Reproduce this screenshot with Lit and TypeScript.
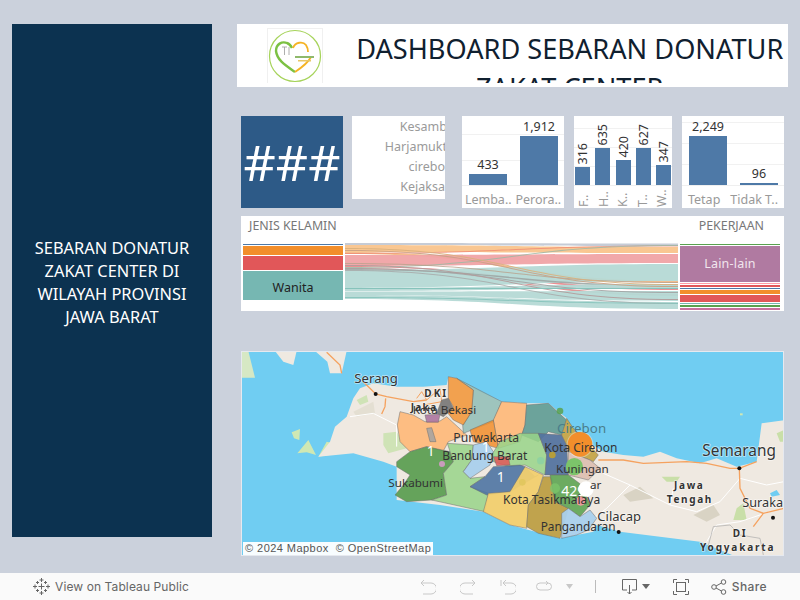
import { LitElement, html, css, svg } from "lit";
import { customElement } from "lit/decorators.js";

type Bar = { v: string; h: number; label: string };
const X = 810; // offset between the two map halves, in map units

const z4 = (pts: number[]) => pts.map((n, i) => (i % 2 === 0 ? n + X : n)).join(" ");
const poly = (pts: string, fill: string, op = 0.85) =>
  svg`<polygon points=${pts} fill=${fill} fill-opacity=${op} stroke="#6f6f6f" stroke-opacity=".6" stroke-width="2.5" stroke-linejoin="round"></polygon>`;

const regions: [string, string, number?][] = [
  ["480,200 520,210 555,230 600,228 620,215 680,270 625,290 610,318 560,305 510,320 480,290 472,240", "#fdbb7c", 0.95],
  ["650,100 785,170 760,230 670,265 668,240 695,200 700,135", "#8fbdb6"],
  ["625,95 650,100 700,135 695,200 670,240 640,225 620,200 640,185 625,160", "#f28e2b", 0.8],
  ["605,165 625,160 640,190 610,215 590,205", "#6f6f6f"],
  ["555,210 600,208 595,232 560,232", "#a86f9b"],
  ["560,250 575,248 588,290 570,290", "#a3a3a3"],
  ["785,170 860,175 855,240 840,290 775,310 760,225", "#fdbb7c", 0.95],
  ["690,255 760,225 775,310 720,295 700,290", "#f28e2b", 0.85],
  [z4([50, 180, 115, 175, 170, 225, 155, 270, 115, 260, 85, 290, 35, 270, 45, 240]), "#5d9b94", 0.9],
  ["470,350 510,320 560,305 630,320 640,350 610,385 620,450 575,465 500,470 465,450 490,420 510,390 470,365", "#559b4c", 0.9],
  ["610,385 640,350 622,295 700,300 695,345 670,380 690,400 735,395 690,425 745,445 735,500 575,465 620,450", "#98d488"],
  ["700,300 740,290 760,320 750,360 690,400 670,380 695,345", "#a9d0ec", 0.95],
  [z4([30, 265, 85, 265, 110, 330, 105, 390, 45, 360, 0, 365, -50, 350, -55, 330, -30, 290]), "#98d488"],
  ["760,365 840,360 855,365 885,395 895,390 810,440 740,450 690,425 735,395", "#4e74a3", 0.9],
  ["760,335 805,335 810,360 770,362", "#e15759"],
  ["745,445 810,440 855,365 910,390 895,440 865,480 860,550 810,540 730,500", "#f1cf6e", 0.95],
  [z4([100, 395, 125, 395, 135, 470, 175, 490, 150, 580, 85, 565, 50, 545, 55, 480, 85, 440]), "#bd9f45", 0.95],
  [z4([85, 265, 155, 270, 170, 300, 175, 390, 105, 390, 110, 330]), "#54749f", 0.95],
  [z4([155, 270, 170, 220, 190, 250, 265, 330, 250, 350, 240, 345, 175, 320, 170, 300]), "#c4a548", 0.95],
  [z4([175, 320, 240, 345, 270, 370, 235, 405, 175, 390]), "#dcc0b2", 0.95],
  [z4([120, 390, 175, 390, 215, 420, 240, 480, 210, 515, 175, 490, 135, 470]), "#64a85a", 0.95],
  [z4([155, 505, 175, 490, 210, 515, 240, 495, 260, 520, 235, 555, 200, 570, 155, 580]), "#a9d0ec", 0.95],
];

const labels: [number, number, string, number][] = [
  [343, 113, "Serang", 39.500],
  [518, 208, "Kota Bekasi", 35],
  [640, 292, "Purwakarta", 36.500],
  [607, 346, "Bandung Barat", 36],
  [445, 425, "Sukabumi", 35],
  [X + 103, 320, "Kota Cirebon", 36],
  [X + 138, 383, "Kuningan", 35],
  [X + 240, 432, "ar", 35],
  [789, 478, "Kota Tasikmalaya", 36],
  [X + 92, 558, "Pangandaran", 35.500],
  [X + 262, 527, "Cilacap", 39],
  [X + 577, 332, "Semarang", 46],
  [X + 697, 485, "Surakarta", 38],
];
const bold: [number, number, string, number][] = [
  [553, 155, "DKI", 6],
  [512, 197, "Jaka", 4],
  [X + 492, 432, "Jawa", 5],
  [X + 470, 474, "Tengah", 5],
  [X + 668, 575, "DI", 5],
  [X + 570, 617, "Yogyakarta", 5.500],
];

const sankeyBands: [number, number, number, number, string, number][] = [
  [243, 245, 243.500, 246, "#c6ccd6", 1],
  [245, 252, 247, 253, "#f9c48c", 0.95],
  [252, 254, 281, 283, "#f2b27a", 0.85],
  [253, 254, 245.500, 246.500, "#ef8a73", 0.8],
  [255, 266, 254, 263, "#f0a3a5", 0.95],
  [266, 267, 288, 290, "#e98488", 0.9],
  [268, 269, 294, 296, "#d98f8f", 0.9],
  [270, 288, 264, 281, "#b5d9d5", 0.95],
  [267, 268, 245, 246, "#a2b8a4", 0.9],
  [269, 270, 285, 287, "#9da6a4", 0.9],
  [288, 291, 284, 288, "#b5d9d5", 0.95],
  [291.500, 295, 291, 301, "#b5d9d5", 0.95],
  [295, 299, 302, 309, "#b5d9d5", 0.95],
  [268, 269, 292, 293, "#a3a3a3", 0.9],
  [263, 264, 282, 283, "#b9a18c", 0.8],
  [248, 249, 284, 285, "#d9b07c", 0.9],
  [250, 251, 286, 287, "#c9a184", 0.9],
  [265, 266, 299, 300, "#b39a9a", 0.9],
  [270, 271, 303, 304, "#a6a6a6", 0.8],
  [288, 289, 288, 289, "#86c3bb", 1],
  [297, 298, 303, 304, "#86c3bb", 0.9],
];
const band = (y0: number, y1: number, y2: number, y3: number, c: string, o: number) =>
  svg`<path d="M0 ${y0 - 243}C167 ${y0 - 243} 167 ${y2 - 243} 333 ${y2 - 243}V${y3 - 243}C167 ${y3 - 243} 167 ${y1 - 243} 0 ${y1 - 243}Z" fill=${c} fill-opacity=${o}></path>`;

const charts: { cls: string; grid: number; w: number; bars: Bar[] }[] = [
  { cls: "c1", grid: 25.500, w: 38, bars: [{ v: "433", h: 11, label: "Lemba.." }, { v: "1,912", h: 49, label: "Perora.." }] },
  {
    cls: "c2", grid: 19, w: 15,
    bars: [
      { v: "316", h: 18, label: "F.." }, { v: "635", h: 37, label: "H.." }, { v: "420", h: 25, label: "K.." },
      { v: "627", h: 37, label: "T.." }, { v: "347", h: 20, label: "W.." },
    ],
  },
  { cls: "c3", grid: 21, w: 38, bars: [{ v: "2,249", h: 49, label: "Tetap" }, { v: "96", h: 2, label: "Tidak T.." }] },
];

@customElement("app-root")
export class AppRoot extends LitElement {
  static styles = css`
    :host { display: block; width: 800px; height: 600px; background: #cbd1dc; font-family: "Noto Sans", sans-serif; overflow: hidden; }
    .page { display: flex; flex-direction: column; height: 600px; }
    .main { flex: 1; display: flex; gap: 25px; padding: 24px 12px 0; min-height: 0; }
    .side { width: 200px; height: 513px; flex: none; background: #0c3250; color: #fff; display: flex; align-items: center; justify-content: center; text-align: center; font-size: 16.400px; line-height: 23px; padding: 2px 15px 0; box-sizing: border-box; }
    .content { width: 551px; flex: none; display: flex; flex-direction: column; }
    .head { height: 63px; background: #fff; display: flex; padding-bottom: 4px; box-sizing: border-box; }
    .logo { width: 115px; flex: none; padding: 4px 0 0 30px; box-sizing: border-box; }
    .logo svg { display: block; }
    .title { flex: 1; min-width: 0; height: 59px; overflow: hidden; text-align: center; font-size: 28px; line-height: 39px; color: #10202f; padding: 5px 0 0; box-sizing: border-box; }
    .title span { display: block; width: 103.100%; margin-left: -1.550%; transform: scaleX(.97); }
    .row { display: flex; margin: 29px 0 0 4px; height: 92px; }
    .kpi { width: 102px; background: #2d5a87; color: #fff; font-size: 50px; line-height: 92px; text-align: center; }
    .list { width: 93px; height: 83px; margin-left: 9px; background: #fff; overflow: hidden; display: flex; flex-direction: column; padding-top: 1px; box-sizing: border-box; }
    .list div { height: 20px; line-height: 20px; font-size: 12.500px; color: #9a9a9a; text-align: right; white-space: nowrap; }
    .list div:nth-child(-n+2) { margin-right: -2px; }
    .chart { background: #fff; width: 102px; display: flex; flex-direction: column; }
    .c1 { margin-left: 17px; }
    .c2 { margin-left: 10px; width: 98px; }
    .c3 { margin-left: 10px; }
    .plot { height: 70px; flex: none; display: flex; align-items: flex-end; gap: 13px; padding: 0 0 0 7px; box-sizing: border-box; border-bottom: 1px solid #efefef; }
    .c2 .plot { padding: 0 1px; gap: 0; justify-content: space-between; }
    .col { display: flex; flex-direction: column; align-items: center; justify-content: flex-end; }
    .col b { font-weight: 400; font-size: 12.500px; line-height: 18px; color: #333; white-space: nowrap; }
    .c2 .col b { writing-mode: vertical-rl; transform: rotate(180deg); line-height: 15px; margin-bottom: 3px; }
    .col i { display: block; background: #4e79a7; }
    .labels { display: flex; justify-content: space-around; padding: 0 1px; }
    .labels span { font-size: 12.500px; line-height: 28px; color: #999; white-space: nowrap; }
    .c2 .labels { justify-content: space-between; padding: 0 2px; }
    .c2 .labels span { writing-mode: vertical-rl; transform: rotate(180deg); line-height: 16px; height: 21px; }
    .sankey { margin: 8px 0 0 4px; width: 543px; height: 95px; background: #fff; display: flex; flex-direction: column; }
    .sk-head { height: 28px; display: flex; justify-content: space-between; font-size: 12.400px; line-height: 19px; color: #777; padding: 0 20px 0 8px; flex: none; }
    .sk-body { display: flex; gap: 2px; padding: 0 2px; }
    .stack { width: 100px; display: flex; flex-direction: column; flex: none; }
    .stack div { flex: none; display: flex; align-items: center; justify-content: center; font-size: 12.500px; }
    .wanita { color: #222; padding-top: 4px; box-sizing: border-box; }
    .lain { color: #f1e6ee; letter-spacing: .2px; }
    .flow { width: 333px; height: 68px; margin-top: -1px; display: block; flex: none; }
    .map { position: relative; margin: 40px 0 0 4px; width: 543px; height: 205px; overflow: hidden; background: #70cdf2; }
    .map svg { display: block; width: 543px; height: 205px; }
    .map text { font-family: "Noto Sans", sans-serif; fill: #333; }
    .attr { position: absolute; left: 2px; bottom: 1px; height: 13px; padding: 0 2px; background: rgba(255,255,255,.95); font: 11px/13px "Liberation Sans", sans-serif; color: #555; white-space: pre; letter-spacing: .45px; }
    .frame { position: absolute; inset: 0; border: 1px solid #e6e9ef; pointer-events: none; }
    .bar { height: 27px; flex: none; background: #fafafa; display: flex; align-items: center; color: #666; font-family: "Inter", sans-serif; font-size: 12px; }
    .bar svg { display: block; flex: none; }
    .pub { margin-left: 33px; display: flex; align-items: center; gap: 5px; letter-spacing: .1px; }
    .tools { margin-left: auto; display: flex; align-items: center; padding-right: 33px; }
    .tools .u { margin-right: 24px; }
    .tools .u.last { margin-right: 20px; }
    .tools .rf { margin-right: 14px; }
    .tools .c0 { margin-right: 22px; }
    .tools .dl { margin-right: 5px; }
    .tools .c1x { margin-right: 23px; }
    .tools .fs { margin-right: 22px; }
    .sep { width: 1px; height: 13px; background: #bbb; margin: 0 26px 0 0; }
    .share { margin-left: 5px; font-weight: 500; letter-spacing: .4px; }
  `;

  private chart(c: (typeof charts)[number]) {
    return html`<div class="chart ${c.cls}">
      <div class="plot" style="background-image:repeating-linear-gradient(to top,transparent 0 ${c.grid - 1}px,#f1f1f1 ${c.grid - 1}px ${c.grid}px)">
        ${c.bars.map((b) => html`<div class="col"><b>${b.v}</b><i style="width:${c.w}px;height:${b.h}px"></i></div>`)}
      </div>
      <div class="labels">${c.bars.map((b) => html`<span>${b.label}</span>`)}</div>
    </div>`;
  }

  private mapSvg() {
    return html`<svg viewBox="3 18 1629 615">
      <rect x="3" y="18" width="1629" height="615" fill="#70cdf2"></rect>
      <path d="M3 18H25L45 98H3Z" fill="#d6e8c4"></path>
      <path d="M105 18H170L160 60L130 50Z" fill="#efe9e1"></path>
      <path d="M225 18H320L305 85H270L262 50Z" fill="#efe9e1"></path>
      <path d="M260 22L300 60L305 85" fill="none" stroke="#f5a25f" stroke-width="4"></path>
      <path d="M155 262L180 252L178 285L162 280ZM172 325L205 285L228 330L200 322ZM235 335L260 290L280 295L268 330Z" fill="#cfe8b4"></path>
      <path d="M235 335L270 290L285 245L320 215L340 160L360 130L400 115L470 125L550 125L620 120L625 95L650 100L700 130L785 170L860 175L925 175L980 220L1000 260L1060 300L1090 320L1150 330L1210 335L1260 320L1310 340L1380 355L1430 340L1490 365L1550 350L1565 235L1635 225V640H1500L1380 590L1260 575L1140 560L1070 540L1060 560L960 580L810 540L730 500L600 480L470 465L470 365L430 350L340 325Z" fill="#efe9e1"></path>
      <path d="M350 165L380 150L385 170L360 180ZM430 265L470 260L500 310L445 325L430 300Z" fill="#cfe3b6"></path>
      <path d="M340 200L400 170L405 205L350 215Z" fill="#e4dfd2"></path>
      <path d="M1150 450L1200 425L1240 460L1170 470ZM1360 510L1420 480L1440 510L1400 530Z" fill="#d9d3c4"></path>
      <path d="M1265 395L1320 395L1310 410L1280 410ZM1490 490L1510 475L1520 525L1480 525ZM1610 265L1632 255V290L1620 290Z" fill="#c9dfa8"></path>
      <path d="M1590 445L1610 435L1620 450L1595 455Z" fill="#70cdf2"></path>
      <path d="M1500 205h8v6h-8z" fill="#cfe8b4"></path>
      <path d="M330 215L400 205L470 240L470 305M1090 385L1170 420L1100 490L1060 520M1170 420L1290 480L1370 500L1440 470L1500 400M1500 400L1580 420L1632 410M1290 480L1300 430M1400 590L1430 540L1500 530L1590 500" fill="none" stroke="#fff" stroke-width="3"></path>
      <path d="M1400 620L1420 545L1470 540L1500 570L1560 580L1570 630" fill="none" stroke="#a9a9a9" stroke-width="2"></path>
      <path d="M370 110L407 147L440 155L520 170L560 165M437 160L435 185L425 207M1075 345L1150 345L1210 355L1340 350L1400 355L1470 370L1498 370L1550 350M1498 370L1500 430L1530 490L1570 505L1540 545M1570 505L1632 490" fill="none" stroke="#f5a25f" stroke-width="4"></path>
      <path d="M530 160L545 140L560 165L600 130L605 170L550 180" fill="none" stroke="#f5a25f" stroke-width="3"></path>
      ${regions.map(([p, f, o]) => poly(p, f, o ?? 0.85))}
      <circle cx=${X + 150} cy="198" r="10" fill="#59a14f" fill-opacity=".85"></circle>
      <circle cx=${X + 127} cy="330" r="10" fill="#b69d3a"></circle>
      <circle cx=${X + 92} cy="347" r="11" fill="#86d0a6" fill-opacity=".7"></circle>
      <circle cx=${X + 135} cy="430" r="15" fill="#7cc46a" fill-opacity=".8"></circle>
      <circle cx=${X + 37} cy="412" r="10" fill="#e2c75f"></circle>
      <circle cx=${X + 212} cy="468" r="14" fill="#eb9a9c"></circle>
      <circle cx=${X + 210} cy="298" r="40" fill="#fff" fill-opacity=".35"></circle>
      <text x=${X + 141} y="265" font-size="40" style="fill:#4a7d8a">Cirebon</text>
      <circle cx=${X + 210} cy="298" r="37" fill="#f28e2b"></circle>
      <circle cx=${X + 193} cy="365" r="26" fill="#7cc46a"></circle>
      <circle cx=${X + 228} cy="432" r="23" fill="#fff"></circle>
      <circle cx="606" cy="357" r="9" fill="#c99cbd"></circle>
      <g paint-order="stroke" stroke="#fff" stroke-opacity=".55" stroke-width="5" stroke-linejoin="round">
        ${labels.slice(0, 1).concat(labels.slice(10)).map(([x, y, t, s]) => svg`<text x=${x} y=${y} font-size=${s}>${t}</text>`)}
        ${bold.map(([x, y, t, l]) => svg`<text x=${x} y=${y} font-size="30" font-weight="700" letter-spacing=${l}>${t}</text>`)}
      </g>
      ${labels.slice(1, 10).map(([x, y, t, s]) => svg`<text x=${x} y=${y} font-size=${s}>${t}</text>`)}
      <g font-size="42">
        <text x="572" y="332" text-anchor="middle" style="fill:#fff">1</text>
        <text x="737" y="320" text-anchor="middle" style="fill:#fff">1</text>
        <text x="782" y="410" text-anchor="middle" style="fill:#fff">1</text>
        <text x=${X + 190} y="452" text-anchor="middle" style="fill:#fff">429</text>
      </g>
      ${[[407, 147], [X + 688, 370], [X + 326, 561], [X + 789, 518]].map(
        ([x, y]) => svg`<circle cx=${x} cy=${y} r="6" fill="#111"></circle>`
      )}
    </svg>`;
  }

  private tableauIcon() {
    const plus = (x: number, y: number, r: number) => svg`<path d="M${x - r} ${y}H${x + r}M${x} ${y - r}V${y + r}"></path>`;
    return html`<svg width="17" height="17" viewBox="0 0 17 17" fill="none" stroke="#666" stroke-width="1">
      ${plus(8.500, 8.500, 3)}${plus(8.500, 2, 2)}${plus(8.500, 15, 2)}${plus(2, 8.500, 2)}${plus(15, 8.500, 2)}
      ${plus(4.500, 4.500, 1.500)}${plus(12.500, 4.500, 1.500)}${plus(4.500, 12.500, 1.500)}${plus(12.500, 12.500, 1.500)}
    </svg>`;
  }

  render() {
    const left: [number, string, string][] = [
      [1, "#4e79a7", ""], [9, "#f28e2b", ""], [14, "#e15759", ""], [29, "#76b7b2", "Wanita"],
    ];
    const right: [number, string][] = [
      [1, "#59a14f"], [35.500, "#b07aa1"], [1, "#ff9da7"], [2, "#e15759"], [1, "#4e79a7"], [4, "#f28e2b"], [7, "#e15759"], [1, "#76b7b2"], [2, "#59a14f"], [2, "#c76f9e"],
    ];
    return html`<div class="page">
      <div class="main">
        <aside class="side"><span>SEBARAN DONATUR ZAKAT CENTER DI WILAYAH PROVINSI JAWA BARAT</span></aside>
        <div class="content">
          <header class="head">
            <div class="logo">
              <svg width="56" height="55" viewBox="0 0 56 55" fill="none">
                <rect x=".5" y=".5" width="55" height="56" stroke="#f0f0f0"></rect>
                <circle cx="28" cy="28" r="25.500" stroke="#a6d35a" stroke-width="1.200"></circle>
                <path d="M28 44C18 37 10 32 9 23C9 16 15 13 20 15C23 16 24 18 25 20" stroke="#7cc143" stroke-width="2.400"></path>
                <path d="M28 44C34 40 41 35 44 29M26 20C28 14 36 13 39 17C41 20 41 22 41 24" stroke="#f5b324" stroke-width="1.800"></path>
                <path d="M15 19H20M17.500 19V27M22 19V27" stroke="#999" stroke-width=".8"></path>
                <rect x="28" y="28" width="19" height="2" fill="#8fb96b"></rect>
                <rect x="31" y="32" width="13" height="1.500" fill="#e8c766"></rect>
              </svg>
            </div>
            <div class="title"><span>DASHBOARD SEBARAN DONATUR ZAKAT CENTER</span></div>
          </header>
          <div class="row">
            <div class="kpi">###</div>
            <div class="list"><div>Kesamb</div><div>Harjamukt</div><div>cirebo</div><div>Kejaksa</div></div>
            ${charts.map((c) => this.chart(c))}
          </div>
          <section class="sankey">
            <div class="sk-head"><span>JENIS KELAMIN</span><span>PEKERJAAN</span></div>
            <div class="sk-body">
              <div class="stack">
                ${left.map(([h, c, t]) => html`<div class="${t ? "wanita" : ""}" style="height:${h}px;background:${c};margin-bottom:1px">${t}</div>`)}
              </div>
              <svg class="flow" viewBox="0 0 333 68">${sankeyBands.map(([a, b, c, d, col, o]) => band(a, b, c, d, col, o))}</svg>
              <div class="stack">
                ${right.map(([h, c], i) => html`<div class="${i === 1 ? "lain" : ""}" style="height:${h}px;background:${c};margin-bottom:1px">${i === 1 ? "Lain-lain" : ""}</div>`)}
              </div>
            </div>
          </section>
          <section class="map">
            ${this.mapSvg()}
            <div class="attr">© 2024 Mapbox  © OpenStreetMap</div>
            <div class="frame"></div>
          </section>
        </div>
      </div>
      <footer class="bar">
        <div class="pub">${this.tableauIcon()}<span>View on Tableau Public</span></div>
        <div class="tools">
          <svg class="u" width="16" height="16" viewBox="0 0 16 16" fill="none" stroke="#c8c8c8"><path d="M1 4H11A4.500 4.500 0 0 1 11 15H3M4 1L1 4L4 7" stroke-linejoin="round"></path></svg>
          <svg class="u" width="16" height="16" viewBox="0 0 16 16" fill="none" stroke="#c8c8c8"><path d="M15 4H5A4.500 4.500 0 0 0 5 15H13M12 1L15 4L12 7"></path></svg>
          <svg class="u last" width="16" height="16" viewBox="0 0 16 16" fill="none" stroke="#c8c8c8"><path d="M1 1V7M3 4H11A4.500 4.500 0 0 1 11 15H5M6 1L3 4L6 7"></path></svg>
          <svg class="rf" width="16" height="16" viewBox="0 0 16 16" fill="none" stroke="#c8c8c8"><path d="M12 4H4A3.500 3.500 0 0 0 4 11H12A3.500 3.500 0 0 0 12 4M10 2L12 4L10 6"></path></svg>
          <svg class="c0" width="7" height="5" viewBox="0 0 7 5" fill="#c8c8c8"><path d="M0 0H7L3.500 5Z"></path></svg>
          <div class="sep"></div>
          <svg class="dl" width="15" height="16" viewBox="0 0 15 16" fill="none" stroke="#666"><path d="M5 11H.5V.5H14.500V11H10M7.500 6V15M5.500 13L7.500 15L9.500 13"></path></svg>
          <svg class="c1x" width="8" height="5" viewBox="0 0 8 5" fill="#666"><path d="M0 0H8L4 5Z"></path></svg>
          <svg class="fs" width="16" height="16" viewBox="0 0 16 16" fill="none" stroke="#666"><path d="M.5 4V.5H4M12 .5H15.500V4M15.500 12V15.500H12M4 15.500H.5V12"></path><rect x="3.500" y="3.500" width="9" height="9"></rect></svg>
          <svg width="16" height="16" viewBox="0 0 16 16" fill="none" stroke="#666"><circle cx="3" cy="8" r="2.300"></circle><circle cx="12.500" cy="3" r="2.300"></circle><circle cx="12.500" cy="13" r="2.300"></circle><path d="M5 7L10.500 4M5 9L10.500 12"></path></svg>
          <span class="share">Share</span>
        </div>
      </footer>
    </div>`;
  }
}
